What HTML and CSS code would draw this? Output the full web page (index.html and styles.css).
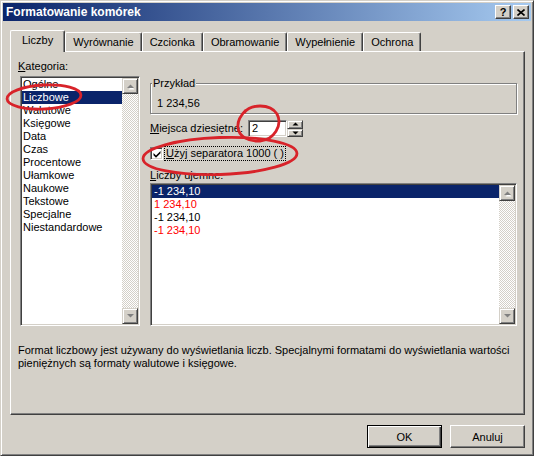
FILE: index.html
```html
<!DOCTYPE html>
<html lang="pl">
<head>
<meta charset="utf-8">
<title>Formatowanie komórek</title>
<link rel="stylesheet" href="styles.css">
</head>
<body>
<div class="dialog">
  <div class="titlebar">
    <span class="title">Formatowanie komórek</span>
    <div class="tbtns">
      <span class="tbtn help">?</span>
      <span class="tbtn close"><svg width="8" height="7" viewBox="0 0 8 7"><path d="M0.5 0.5 L7.5 6.5 M7.5 0.5 L0.5 6.5" stroke="#000" stroke-width="1.6" fill="none"/></svg></span>
    </div>
  </div>
  <div class="tabs">
    <div class="tab sel">Liczby</div>
    <div class="tab">Wyrównanie</div>
    <div class="tab">Czcionka</div>
    <div class="tab">Obramowanie</div>
    <div class="tab">Wypełnienie</div>
    <div class="tab">Ochrona</div>
  </div>
  <div class="panel">
    <div class="cols">
      <div class="left">
        <div class="lbl"><u>K</u>ategoria:</div>
        <div class="listbox cat">
          <div class="items">
            <div class="item">Ogólne</div>
            <div class="item on">Liczbowe</div>
            <div class="item">Walutowe</div>
            <div class="item">Księgowe</div>
            <div class="item">Data</div>
            <div class="item">Czas</div>
            <div class="item">Procentowe</div>
            <div class="item">Ułamkowe</div>
            <div class="item">Naukowe</div>
            <div class="item">Tekstowe</div>
            <div class="item">Specjalne</div>
            <div class="item">Niestandardowe</div>
          </div>
          <div class="vscroll">
            <div class="sbtn"><svg width="12" height="12" viewBox="0 0 12 12"><polygon points="3.5,8.5 9.5,8.5 6.5,5.5" fill="#fff" transform="translate(1,1)"/><polygon points="3,8 10,8 6.5,4.5" fill="#808080"/></svg></div>
            <div class="track"></div>
            <div class="sbtn"><svg width="12" height="12" viewBox="0 0 12 12"><polygon points="3,4 10,4 6.5,7.5" fill="#808080"/></svg></div>
          </div>
        </div>
      </div>
      <div class="right">
        <div class="group">
          <span class="legend">Przykład</span>
          <div class="sample">1 234,56</div>
        </div>
        <div class="spinrow">
          <span class="spinlbl"><u>M</u>iejsca dziesiętne:</span>
          <div class="edit">2</div>
          <div class="spinner">
            <div class="spbtn"><svg width="7" height="4" viewBox="0 0 7 4"><polygon points="0.5,3.5 6.5,3.5 3.5,0.5" fill="#000"/></svg></div>
            <div class="spbtn"><svg width="7" height="4" viewBox="0 0 7 4"><polygon points="0.5,0.5 6.5,0.5 3.5,3.5" fill="#000"/></svg></div>
          </div>
        </div>
        <div class="checkrow">
          <span class="checkbox"><svg width="8" height="8" viewBox="0 0 8 8"><path d="M0.5 3 L3 5.5 L7.5 1 L7.5 3.3 L3 7.8 L0.5 5.3 Z" fill="#000"/></svg></span>
          <span class="focus"><u>U</u>żyj separatora 1000 ( )</span>
        </div>
        <div class="lbl neglbl"><u>L</u>iczby ujemne:</div>
        <div class="listbox neg">
          <div class="items">
            <div class="item on">-1 234,10</div>
            <div class="item red">1 234,10</div>
            <div class="item">-1 234,10</div>
            <div class="item red">-1 234,10</div>
          </div>
          <div class="vscroll">
            <div class="sbtn"><svg width="12" height="12" viewBox="0 0 12 12"><polygon points="3.5,8.5 9.5,8.5 6.5,5.5" fill="#fff" transform="translate(1,1)"/><polygon points="3,8 10,8 6.5,4.5" fill="#808080"/></svg></div>
            <div class="track"></div>
            <div class="sbtn"><svg width="12" height="12" viewBox="0 0 12 12"><polygon points="3,4 10,4 6.5,7.5" fill="#808080"/></svg></div>
          </div>
        </div>
      </div>
    </div>
    <p class="desc">Format liczbowy jest używany do wyświetlania liczb. Specjalnymi formatami do wyświetlania wartości pieniężnych są formaty walutowe i księgowe.</p>
  </div>
  <div class="buttons">
    <button class="btn default">OK</button>
    <button class="btn">Anuluj</button>
  </div>
</div>
<svg class="marks" width="534" height="456" viewBox="0 0 534 456">
  <ellipse cx="44" cy="97" rx="37" ry="12" transform="rotate(-3 44 97)" />
  <path d="M244 113 C250 104 270 103 277 114 C283 125 274 140 260 141 C248 142 239 136 238 128 C237 121 240 116 246 110" />
  <ellipse cx="220" cy="156" rx="77" ry="18.5" transform="rotate(-2 220 156)" />
</svg>
</body>
</html>
```
FILE: styles.css
```css
* { box-sizing: border-box; }
html, body { margin: 0; padding: 0; }
body {
  position: relative;
  width: 534px;
  height: 456px;
  overflow: hidden;
  font-family: "Liberation Sans", Arial, sans-serif;
  font-size: 11px;
  color: #000;
  background: #d4d0c8;
}
.dialog {
  width: 534px;
  height: 456px;
  background: #d4d0c8;
  border: 1px solid;
  border-color: #d4d0c8 #404040 #404040 #d4d0c8;
  box-shadow: inset 1px 1px #fff, inset -1px -1px #808080;
  padding: 2px;
  display: flex;
  flex-direction: column;
}
.titlebar {
  height: 18px;
  flex: none;
  background: linear-gradient(to right, #0a246a, #a6caf0);
  display: flex;
  align-items: center;
  justify-content: space-between;
  padding: 0 2px 0 3px;
}
.title {
  color: #fff;
  font-weight: bold;
  font-size: 12px;
  line-height: 14px;
}
.tbtns { display: flex; gap: 2px; }
.tbtn {
  width: 16px;
  height: 14px;
  background: #d4d0c8;
  border: 1px solid;
  border-color: #fff #404040 #404040 #fff;
  box-shadow: inset -1px -1px #808080;
  display: flex;
  align-items: center;
  justify-content: center;
  font-weight: bold;
  font-size: 11px;
  line-height: 12px;
}
.tabs {
  display: flex;
  align-items: flex-end;
  height: 21px;
  margin: 9px 0 0 7px;
  flex: none;
}
.tab {
  height: 19px;
  padding: 3px 7px 0;
  line-height: 13px;
  border-top: 1px solid #fff;
  border-left: 1px solid #fff;
  border-right: 1px solid #404040;
  border-radius: 2px 2px 0 0;
  box-shadow: inset -1px 0 #808080;
  background: #d4d0c8;
  white-space: nowrap;
}
.tab.sel {
  position: relative;
  z-index: 1;
  height: 22px;
  margin-bottom: -1px;
  padding: 3px 11px 0;
}
.panel {
  height: 364px;
  margin: 0 6px 0 7px;
  flex: none;
  border: 1px solid;
  border-color: #fff #404040 #404040 #fff;
  box-shadow: inset -1px -1px #808080;
  padding: 8px 7px 0 7px;
}
.cols {
  display: grid;
  grid-template-columns: 122px 367px;
  column-gap: 10px;
}
.lbl { line-height: 13px; white-space: nowrap; }
.listbox {
  background: #fff;
  border: 1px solid;
  border-color: #808080 #fff #fff #808080;
  box-shadow: inset 1px 1px #404040, inset -1px -1px #d4d0c8;
  padding: 1px;
  display: flex;
}
.listbox .items { flex: 1; min-width: 0; }
.item { line-height: 13px; height: 13px; padding-left: 1px; white-space: nowrap; }
.item.on { background: #0a246a; color: #fff; }
.item.red { color: #ff0000; }
.cat { margin: 3px 0 0 2px; height: 250px; }
.neg { margin-top: 1px; height: 143px; }
.neg .item { padding-left: 2px; }
.vscroll {
  width: 16px;
  flex: none;
  display: flex;
  flex-direction: column;
}
.sbtn {
  width: 16px;
  height: 16px;
  flex: none;
  background: #d4d0c8;
  border: 1px solid;
  border-color: #d4d0c8 #404040 #404040 #d4d0c8;
  box-shadow: inset 1px 1px #fff, inset -1px -1px #808080;
  display: flex;
  align-items: center;
  justify-content: center;
}
.track {
  flex: 1;
  background-image: repeating-conic-gradient(#fff 0 25%, #d4d0c8 0 50%);
  background-size: 2px 2px;
}
.group {
  position: relative;
  margin-top: 23px;
  height: 31px;
  border: 1px solid #808080;
  box-shadow: inset 1px 1px #fff, 1px 1px #fff;
  padding: 13px 0 0 6px;
}
.legend {
  position: absolute;
  top: -7px;
  left: 1px;
  padding: 0 1px;
  line-height: 13px;
  background: #d4d0c8;
}
.sample { line-height: 13px; }
.spinrow {
  margin-top: 6px;
  height: 17px;
  display: flex;
  align-items: center;
}
.spinlbl { width: 98px; line-height: 13px; white-space: nowrap; }
.edit {
  width: 39px;
  height: 17px;
  background: #fff;
  border: 1px solid;
  border-color: #808080 #fff #fff #808080;
  box-shadow: inset 1px 1px #404040, inset -1px -1px #d4d0c8;
  padding: 1px 0 0 3px;
  line-height: 13px;
}
.spinner {
  width: 16px;
  height: 17px;
  display: flex;
  flex-direction: column;
}
.spbtn {
  flex: 1;
  background: #d4d0c8;
  border: 1px solid;
  border-color: #d4d0c8 #404040 #404040 #d4d0c8;
  box-shadow: inset 1px 1px #fff, inset -1px -1px #808080;
  display: flex;
  align-items: center;
  justify-content: center;
}
.checkrow {
  margin-top: 9px;
  height: 15px;
  display: flex;
  align-items: center;
}
.checkbox {
  width: 13px;
  height: 13px;
  background: #fff;
  border: 1px solid;
  border-color: #808080 #fff #fff #808080;
  box-shadow: inset 1px 1px #404040, inset -1px -1px #d4d0c8;
  display: flex;
  align-items: center;
  justify-content: center;
}
.focus {
  margin-left: 1px;
  border: 1px dotted #000;
  padding: 0 1px;
  line-height: 13px;
  white-space: nowrap;
}
.neglbl { margin-top: 8px; }
.desc {
  margin: 18px 0 0 0;
  line-height: 13px;
}
.buttons {
  display: flex;
  justify-content: flex-end;
  gap: 8px;
  margin-top: 10px;
  padding-right: 6px;
}
.btn {
  width: 75px;
  height: 23px;
  font-family: "Liberation Sans", Arial, sans-serif;
  font-size: 11px;
  color: #000;
  background: #d4d0c8;
  border: 1px solid;
  border-color: #fff #404040 #404040 #fff;
  box-shadow: inset -1px -1px #808080;
  padding: 0;
}
.btn.default {
  border-color: #000;
  box-shadow: inset 1px 1px #fff, inset -1px -1px #404040, inset -2px -2px #808080;
}
.marks {
  position: absolute;
  top: 0;
  left: 0;
  fill: none;
  stroke: #d8232a;
  stroke-width: 2.8;
  pointer-events: none;
}
```
